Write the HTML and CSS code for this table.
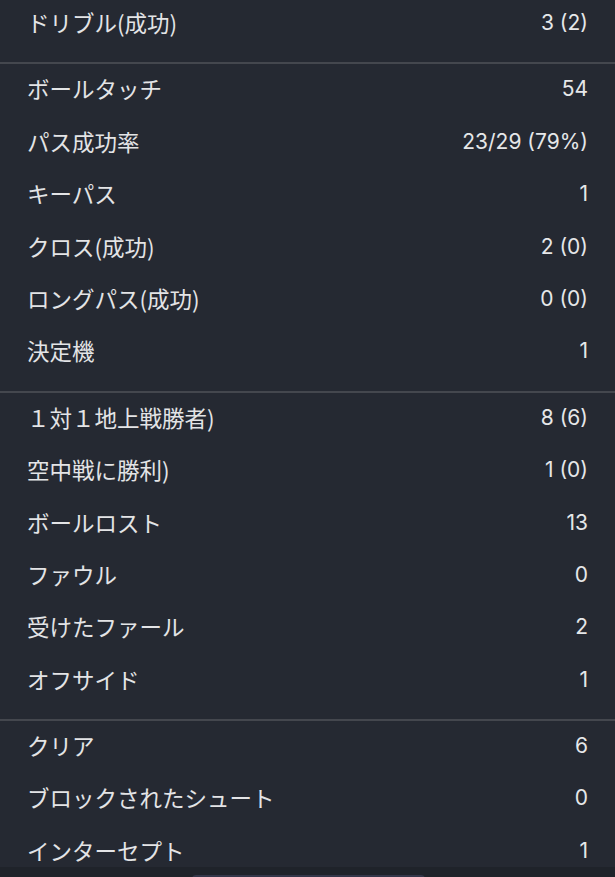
FILE: index.html
```html
<!DOCTYPE html>
<html lang="ja">
<head>
<meta charset="utf-8">
<link rel="stylesheet" href="styles.css">
</head>
<body>
<div class="stats">
  <section class="group">
    <div class="row"><span class="label">ドリブル(成功)</span><span class="value">3 (2)</span></div>
  </section>
  <section class="group">
    <div class="row"><span class="label">ボールタッチ</span><span class="value">54</span></div>
    <div class="row"><span class="label">パス成功率</span><span class="value">23/29 (79%)</span></div>
    <div class="row"><span class="label">キーパス</span><span class="value">1</span></div>
    <div class="row"><span class="label">クロス(成功)</span><span class="value">2 (0)</span></div>
    <div class="row"><span class="label">ロングパス(成功)</span><span class="value">0 (0)</span></div>
    <div class="row"><span class="label">決定機</span><span class="value">1</span></div>
  </section>
  <section class="group">
    <div class="row"><span class="label">１対１地上戦勝者)</span><span class="value">8 (6)</span></div>
    <div class="row"><span class="label">空中戦に勝利)</span><span class="value">1 (0)</span></div>
    <div class="row"><span class="label">ボールロスト</span><span class="value">13</span></div>
    <div class="row"><span class="label">ファウル</span><span class="value">0</span></div>
    <div class="row"><span class="label">受けたファール</span><span class="value">2</span></div>
    <div class="row"><span class="label">オフサイド</span><span class="value">1</span></div>
  </section>
  <section class="group last">
    <div class="row"><span class="label">クリア</span><span class="value">6</span></div>
    <div class="row"><span class="label">ブロックされたシュート</span><span class="value">0</span></div>
    <div class="row"><span class="label">インターセプト</span><span class="value">1</span></div>
  </section>
</div>
<div class="bottom-bar"><div class="handle"></div></div>
</body>
</html>
```

FILE: styles.css
```css
html, body {
  margin: 0;
  padding: 0;
  background: #252932;
  overflow: hidden;
}
body {
  width: 615px;
  height: 877px;
  position: relative;
  font-family: "Noto Sans CJK JP", "Noto Sans", sans-serif;
  color: #e3e4e6;
}
.stats {
  margin-top: -2.2px;
}
.group {
  padding-bottom: 12px;
  border-bottom: 2px solid #44474e;
}
.group.last {
  border-bottom: none;
}
.row {
  box-sizing: border-box;
  height: 52.4px;
  display: flex;
  align-items: center;
  justify-content: space-between;
  padding: 0 27px 4px 27px;
}
.label {
  font-size: 22.5px;
  letter-spacing: 0;
}
.value {
  font-family: Inter, "Noto Sans", sans-serif;
  font-size: 21px;
  color: #e6e7e9;
  padding-top: 1px;
}
.bottom-bar {
  position: absolute;
  left: 0;
  right: 0;
  bottom: 0;
  height: 10px;
  background: #1f232a;
}
.handle {
  position: absolute;
  left: 192px;
  width: 233px;
  top: 8px;
  height: 6px;
  border-radius: 4px 4px 0 0;
  background: #34374a;
}
```
